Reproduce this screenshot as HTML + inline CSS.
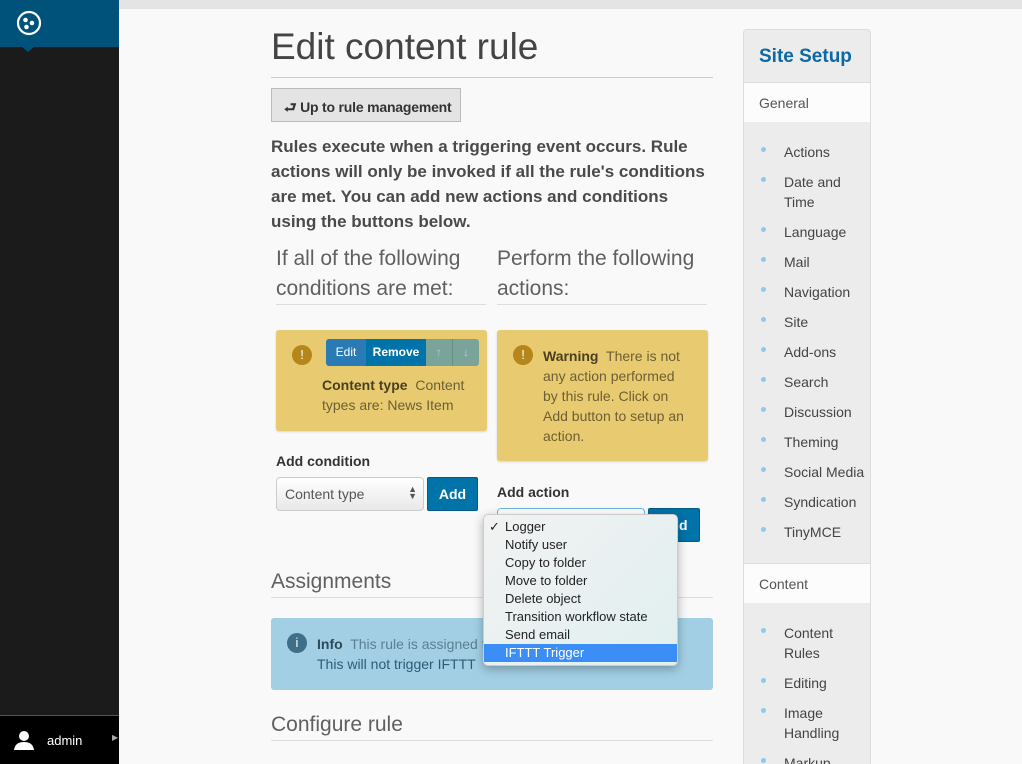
<!DOCTYPE html>
<html><head><meta charset="utf-8"><style>
*{margin:0;padding:0;box-sizing:border-box}
html,body{width:1022px;height:764px;overflow:hidden}
body{background:#f9f9f9;font-family:"Liberation Sans",sans-serif;color:#4a4a4a;position:relative}
.a{position:absolute}
.side{left:0;top:0;width:119px;height:764px;background:#1b1b1b}
.logo{left:0;top:0;width:119px;height:47px;background:#00527a}
.tri{left:22px;top:47px;width:0;height:0;border-left:6px solid transparent;border-right:6px solid transparent;border-top:5px solid #00527a}
.user{left:0;top:715px;width:119px;height:49px;background:#000;border-top:1px solid #555;color:#fff;font-size:13px}
.topbar{left:119px;top:0;width:903px;height:9px;background:#e4e4e4}
h1{position:absolute;left:271px;top:26px;font-size:37px;font-weight:normal;color:#444}
.hr{position:absolute;height:1px;background:#ccc}
.btn{left:271px;top:88px;width:190px;height:34px;background:#e4e4e4;border:1px solid #bbb;font-size:14px;font-weight:bold;color:#333;padding:8px 0 0 12px;letter-spacing:-0.2px}
.intro{left:271px;top:134px;width:434px;font-size:17px;font-weight:bold;line-height:25px;color:#4a4a4a}
.h3{font-size:21px;font-weight:300;color:#606060;line-height:30px}
.warn{background:#e8cb71;border-radius:3px;box-shadow:0 1px 2px rgba(0,0,0,.15);font-size:14px;color:#6d5e33;line-height:20px}
.ic{width:20px;height:20px;border-radius:50%;background:#b5861a;color:#fff;font-size:13px;text-align:center;line-height:20px}
.lbl{font-size:14px;font-weight:bold;color:#333}
.sel{background:linear-gradient(#fff,#e8e8e8);border:1px solid #ccc;border-radius:4px;font-size:14px;color:#555;padding:8px 0 0 8px}
.add{background:#0073a8;color:#fff;font-weight:bold;font-size:14px;text-align:center;border:1px solid #005c87;border-radius:2px}
.menu{left:483px;top:514px;width:195px;height:152px;background:linear-gradient(135deg,#f2f2f2,#e0eff0);border:1px solid #ccc;border-radius:5px;box-shadow:0 3px 10px rgba(0,0,0,.3);font-size:13px;color:#222;padding-top:3px}
.menu div{height:18px;line-height:18px;padding-left:21px}
.menu .s{background:#3b8ef5;color:#fff}
.info{left:271px;top:618px;width:442px;height:72px;background:#a3cfe5;border-radius:3px;font-size:14px;line-height:20px;color:#2a5c78}
.port{left:743px;top:29px;width:128px;height:740px;background:#ececec;border:1px solid #ddd;border-radius:4px}
.port .hd{height:52px;color:#0b69a3;font-size:19px;padding:16px 0 0 15px;font-weight:bold}
.port .sec{background:#fcfcfc;height:40px;font-size:14px;padding:12px 0 0 15px;color:#555;border-top:1px solid #ddd}
.port ul{list-style:none;padding:20px 0 11px}
.port li{position:relative;padding-left:40px;font-size:14px;line-height:20px;margin-bottom:10px;color:#444}
.port li:before{content:"";position:absolute;left:17px;top:5px;width:5px;height:5px;border-radius:50%;background:#8ec9ee}
</style></head><body>
<div class="a side"></div>
<div class="a logo"><svg class="a" style="left:16px;top:10px" width="26" height="26" viewBox="0 0 26 26"><circle cx="13" cy="13" r="11" fill="none" stroke="#fff" stroke-width="2.2"/><circle cx="9.5" cy="10" r="2.3" fill="#fff"/><circle cx="16" cy="13" r="2.3" fill="#fff"/><circle cx="10.5" cy="17" r="2.3" fill="#fff"/></svg></div>
<div class="a tri"></div>
<div class="a user"><svg class="a" style="left:13px;top:14px" width="22" height="20" viewBox="0 0 22 20"><circle cx="11" cy="6" r="5" fill="#fff"/><path d="M1 20 Q2 12 11 12 Q20 12 21 20Z" fill="#fff"/></svg><span class="a" style="left:47px;top:17px">admin</span><span class="a" style="left:112px;top:17px;font-size:8px;color:#aaa">▶</span></div>
<div class="a topbar"></div>
<h1>Edit content rule</h1>
<div class="hr" style="left:271px;top:77px;width:442px"></div>
<div class="a btn">⮐ Up to rule management</div>
<div class="a intro">Rules execute when a triggering event occurs. Rule actions will only be invoked if all the rule's conditions are met. You can add new actions and conditions using the buttons below.</div>
<div class="a h3" style="left:276px;top:244px;width:210px">If all of the following conditions are met:</div>
<div class="hr" style="left:276px;top:304px;width:210px;background:#ddd"></div>
<div class="a h3" style="left:497px;top:244px;width:210px">Perform the following actions:</div>
<div class="hr" style="left:497px;top:304px;width:210px;background:#ddd"></div>
<div class="a warn" style="left:276px;top:330px;width:211px;height:101px">
 <div class="a ic" style="left:16px;top:15px">!</div>
 <div class="a" style="left:50px;top:9px;width:153px;height:27px;border-radius:3px;overflow:hidden;font-size:12px;color:#fff;line-height:27px">
  <span class="a" style="left:0;width:40px;height:27px;background:#2a7ab5;text-align:center">Edit</span>
  <span class="a" style="left:40px;width:60px;height:27px;background:#0073a8;text-align:center;font-weight:bold">Remove</span>
  <span class="a" style="left:100px;width:26px;height:27px;background:#7aa39a;text-align:center;color:#bcd">↑</span>
  <span class="a" style="left:126px;width:27px;height:27px;background:#7aa39a;border-left:1px solid #6a8f87;text-align:center;color:#bcd">↓</span>
 </div>
 <div class="a" style="left:46px;top:45px;width:160px"><b style="color:#4a3f20">Content type</b>&nbsp; Content types are: News Item</div>
</div>
<div class="a warn" style="left:497px;top:330px;width:211px;height:131px">
 <div class="a ic" style="left:16px;top:15px">!</div>
 <div class="a" style="left:46px;top:16px;width:150px"><b style="color:#4a3f20">Warning</b>&nbsp; There is not any action performed by this rule. Click on Add button to setup an action.</div>
</div>
<div class="a lbl" style="left:276px;top:453px">Add condition</div>
<div class="a sel" style="left:276px;top:477px;width:148px;height:34px">Content type<span class="a" style="right:6px;top:8px;font-size:9px;line-height:7px">▲<br>▼</span></div>
<div class="a add" style="left:427px;top:477px;width:51px;height:34px;line-height:32px">Add</div>
<div class="a lbl" style="left:497px;top:484px">Add action</div>
<div class="a" style="left:497px;top:508px;width:148px;height:34px;border:1px solid #6ab8e8;border-radius:4px;background:#fff"></div>
<div class="a add" style="left:648px;top:508px;width:52px;height:34px;line-height:32px">Add</div>
<div class="a h3" style="left:271px;top:567px">Assignments</div>
<div class="hr" style="left:271px;top:597px;width:442px;background:#ddd"></div>
<div class="a info">
 <div class="a ic" style="left:16px;top:15px;background:#3e6f88">i</div>
 <div class="a" style="left:46px;top:16px;width:390px"><b style="color:#2c4a5a">Info</b>&nbsp; <span style="color:#5a7f92">This rule is assigned to</span><br>This will not trigger IFTTT</div>
</div>
<div class="a menu">
 <div style="position:relative"><span class="a" style="left:5px;top:0;padding:0">✓</span>Logger</div>
 <div>Notify user</div><div>Copy to folder</div><div>Move to folder</div><div>Delete object</div><div>Transition workflow state</div><div>Send email</div><div class="s">IFTTT Trigger</div>
</div>
<div class="a h3" style="left:271px;top:710px">Configure rule</div>
<div class="hr" style="left:271px;top:740px;width:442px;background:#ddd"></div>
<div class="a port">
 <div class="hd">Site Setup</div>
 <div class="sec">General</div>
 <ul><li>Actions</li><li>Date and Time</li><li>Language</li><li>Mail</li><li>Navigation</li><li>Site</li><li>Add-ons</li><li>Search</li><li>Discussion</li><li>Theming</li><li>Social Media</li><li>Syndication</li><li>TinyMCE</li></ul>
 <div class="sec">Content</div>
 <ul><li>Content Rules</li><li>Editing</li><li>Image Handling</li><li>Markup</li></ul>
</div>
</body></html>
